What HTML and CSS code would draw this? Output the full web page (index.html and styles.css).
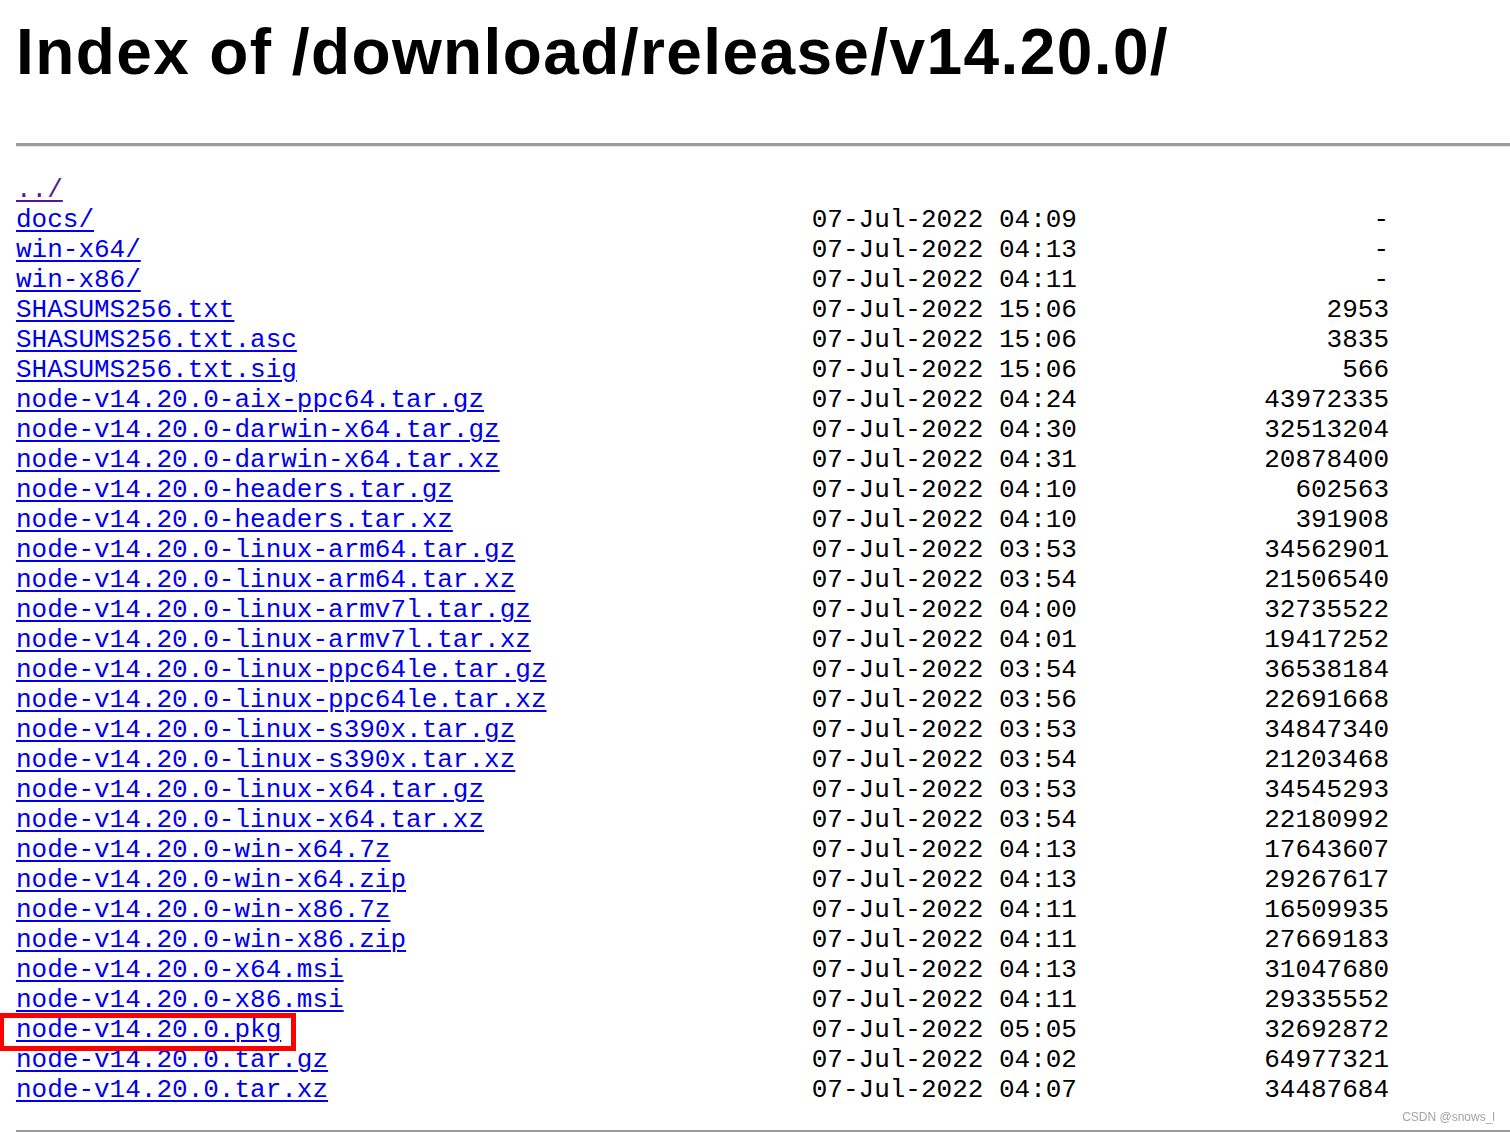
FILE: index.html
```html
<!DOCTYPE html>
<html lang="en">
<head>
    <meta charset="UTF-8"/>
    <title>Index of /download/release/v14.20.0/</title>
    <link rel="stylesheet" href="styles.css">
</head>
<body>

<h1>Index of /download/release/v14.20.0/</h1>
<hr/>

<div class="listing">
    <div class="row"><a class="visited" href="../">../</a></div>
    <div class="row"><a href="docs/">docs/</a><span>07-Jul-2022 04:09</span><span class="size">-</span></div>
    <div class="row"><a href="win-x64/">win-x64/</a><span>07-Jul-2022 04:13</span><span class="size">-</span></div>
    <div class="row"><a href="win-x86/">win-x86/</a><span>07-Jul-2022 04:11</span><span class="size">-</span></div>
    <div class="row"><a href="SHASUMS256.txt">SHASUMS256.txt</a><span>07-Jul-2022 15:06</span><span class="size">2953</span></div>
    <div class="row"><a href="SHASUMS256.txt.asc">SHASUMS256.txt.asc</a><span>07-Jul-2022 15:06</span><span class="size">3835</span></div>
    <div class="row"><a href="SHASUMS256.txt.sig">SHASUMS256.txt.sig</a><span>07-Jul-2022 15:06</span><span class="size">566</span></div>
    <div class="row"><a href="node-v14.20.0-aix-ppc64.tar.gz">node-v14.20.0-aix-ppc64.tar.gz</a><span>07-Jul-2022 04:24</span><span class="size">43972335</span></div>
    <div class="row"><a href="node-v14.20.0-darwin-x64.tar.gz">node-v14.20.0-darwin-x64.tar.gz</a><span>07-Jul-2022 04:30</span><span class="size">32513204</span></div>
    <div class="row"><a href="node-v14.20.0-darwin-x64.tar.xz">node-v14.20.0-darwin-x64.tar.xz</a><span>07-Jul-2022 04:31</span><span class="size">20878400</span></div>
    <div class="row"><a href="node-v14.20.0-headers.tar.gz">node-v14.20.0-headers.tar.gz</a><span>07-Jul-2022 04:10</span><span class="size">602563</span></div>
    <div class="row"><a href="node-v14.20.0-headers.tar.xz">node-v14.20.0-headers.tar.xz</a><span>07-Jul-2022 04:10</span><span class="size">391908</span></div>
    <div class="row"><a href="node-v14.20.0-linux-arm64.tar.gz">node-v14.20.0-linux-arm64.tar.gz</a><span>07-Jul-2022 03:53</span><span class="size">34562901</span></div>
    <div class="row"><a href="node-v14.20.0-linux-arm64.tar.xz">node-v14.20.0-linux-arm64.tar.xz</a><span>07-Jul-2022 03:54</span><span class="size">21506540</span></div>
    <div class="row"><a href="node-v14.20.0-linux-armv7l.tar.gz">node-v14.20.0-linux-armv7l.tar.gz</a><span>07-Jul-2022 04:00</span><span class="size">32735522</span></div>
    <div class="row"><a href="node-v14.20.0-linux-armv7l.tar.xz">node-v14.20.0-linux-armv7l.tar.xz</a><span>07-Jul-2022 04:01</span><span class="size">19417252</span></div>
    <div class="row"><a href="node-v14.20.0-linux-ppc64le.tar.gz">node-v14.20.0-linux-ppc64le.tar.gz</a><span>07-Jul-2022 03:54</span><span class="size">36538184</span></div>
    <div class="row"><a href="node-v14.20.0-linux-ppc64le.tar.xz">node-v14.20.0-linux-ppc64le.tar.xz</a><span>07-Jul-2022 03:56</span><span class="size">22691668</span></div>
    <div class="row"><a href="node-v14.20.0-linux-s390x.tar.gz">node-v14.20.0-linux-s390x.tar.gz</a><span>07-Jul-2022 03:53</span><span class="size">34847340</span></div>
    <div class="row"><a href="node-v14.20.0-linux-s390x.tar.xz">node-v14.20.0-linux-s390x.tar.xz</a><span>07-Jul-2022 03:54</span><span class="size">21203468</span></div>
    <div class="row"><a href="node-v14.20.0-linux-x64.tar.gz">node-v14.20.0-linux-x64.tar.gz</a><span>07-Jul-2022 03:53</span><span class="size">34545293</span></div>
    <div class="row"><a href="node-v14.20.0-linux-x64.tar.xz">node-v14.20.0-linux-x64.tar.xz</a><span>07-Jul-2022 03:54</span><span class="size">22180992</span></div>
    <div class="row"><a href="node-v14.20.0-win-x64.7z">node-v14.20.0-win-x64.7z</a><span>07-Jul-2022 04:13</span><span class="size">17643607</span></div>
    <div class="row"><a href="node-v14.20.0-win-x64.zip">node-v14.20.0-win-x64.zip</a><span>07-Jul-2022 04:13</span><span class="size">29267617</span></div>
    <div class="row"><a href="node-v14.20.0-win-x86.7z">node-v14.20.0-win-x86.7z</a><span>07-Jul-2022 04:11</span><span class="size">16509935</span></div>
    <div class="row"><a href="node-v14.20.0-win-x86.zip">node-v14.20.0-win-x86.zip</a><span>07-Jul-2022 04:11</span><span class="size">27669183</span></div>
    <div class="row"><a href="node-v14.20.0-x64.msi">node-v14.20.0-x64.msi</a><span>07-Jul-2022 04:13</span><span class="size">31047680</span></div>
    <div class="row"><a href="node-v14.20.0-x86.msi">node-v14.20.0-x86.msi</a><span>07-Jul-2022 04:11</span><span class="size">29335552</span></div>
    <div class="row"><a class="marked" href="node-v14.20.0.pkg">node-v14.20.0.pkg</a><span>07-Jul-2022 05:05</span><span class="size">32692872</span></div>
    <div class="row"><a href="node-v14.20.0.tar.gz">node-v14.20.0.tar.gz</a><span>07-Jul-2022 04:02</span><span class="size">64977321</span></div>
    <div class="row"><a href="node-v14.20.0.tar.xz">node-v14.20.0.tar.xz</a><span>07-Jul-2022 04:07</span><span class="size">34487684</span></div>
</div>

<hr/>

<div class="watermark">CSDN @snows_l</div>

</body>
</html>
```

FILE: styles.css
```css
body {
  margin: 0;
  padding: 0 0 0 16px;
  background: white;
  color: black;
  font-family: "Liberation Sans", Arial, sans-serif;
  overflow: hidden;
}
h1 {
  font-size: 64px;
  font-weight: bold;
  line-height: 74px;
  letter-spacing: 1.4px;
  margin: 15px 0 54px;
}
hr {
  height: 0;
  margin: 0;
  border: 0;
  border-top: 3px solid #9a9a9a;
  border-bottom: 1px solid #e8e8e8;
}
.listing {
  margin: 28px 0 25px;
  font-family: "Liberation Mono", "Courier New", monospace;
  font-size: 26px;
  line-height: 30px;
}
.row {
  display: grid;
  grid-template-columns: 51ch 17ch 20ch;
  white-space: pre;
}
.row a {
  justify-self: start;
  color: #0000ee;
  text-decoration-thickness: 2px;
  text-underline-offset: 3px;
}
.row a.visited {
  color: #551a8b;
}
.row .size {
  text-align: right;
}
.marked {
  position: relative;
}
.marked::after {
  content: "";
  position: absolute;
  left: -17px;
  right: -15px;
  top: -2px;
  bottom: -6px;
  border: 5px solid #ff0000;
}
.watermark {
  position: fixed;
  right: 15px;
  bottom: 8px;
  font-size: 12px;
  line-height: 14px;
  color: #a3a3a3;
}
```
